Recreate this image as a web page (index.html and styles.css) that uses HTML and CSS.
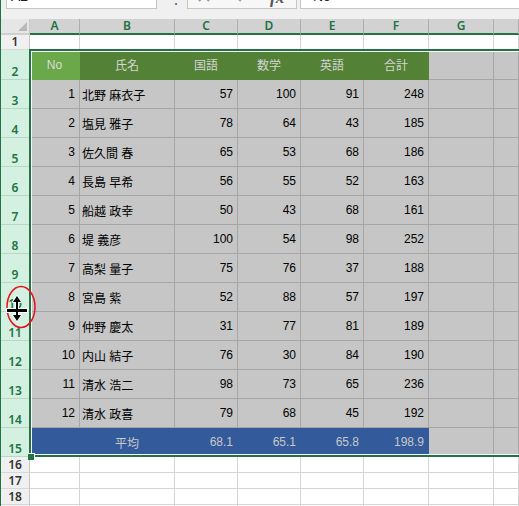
FILE: index.html
```html
<!DOCTYPE html>
<html lang="ja">
<head>
<meta charset="utf-8">
<title>Sheet</title>
<link rel="stylesheet" href="styles.css">
</head>
<body>
<div class="app">
  <div class="fbar">
    <div class="namebox">A2</div>
    <div class="dots">⋮</div>
    <div class="btns">
      <svg class="ico-x" width="16" height="16" viewBox="0 0 16 16"><path d="M3 3 L13 13 M13 3 L3 13" stroke="#9a9a9a" stroke-width="2" fill="none"/></svg>
      <svg class="ico-ok" width="16" height="16" viewBox="0 0 16 16"><path d="M2 8 L6 12 L14 3" stroke="#9a9a9a" stroke-width="2.4" fill="none"/></svg>
      <span class="fx">fx</span>
    </div>
    <div class="finput">No</div>
  </div>

  <div class="sheet">
    <div class="row hdr">
      <div class="corner"><span class="tri"></span></div>
      <div class="ch">A</div><div class="ch">B</div><div class="ch">C</div><div class="ch">D</div><div class="ch">E</div><div class="ch">F</div><div class="ch">G</div><div class="ch"></div>
    </div>
    <div class="row r1">
      <div class="rh">1</div>
      <div class="c"></div><div class="c"></div><div class="c"></div><div class="c"></div><div class="c"></div><div class="c"></div><div class="c"></div><div class="c"></div>
    </div>

    <div class="sel">
      <div class="row r2">
        <div class="rh">2</div>
        <div class="c g1 ctr">No</div><div class="c g2 ctr">氏名</div><div class="c g2 ctr">国語</div><div class="c g2 ctr">数学</div><div class="c g2 ctr">英語</div><div class="c g2 ctr">合計</div><div class="c"></div><div class="c"></div>
      </div>
      <div class="row rd"><div class="rh">3</div><div class="c num">1</div><div class="c nm">北野 麻衣子</div><div class="c num">57</div><div class="c num">100</div><div class="c num">91</div><div class="c num">248</div><div class="c"></div><div class="c"></div></div>
      <div class="row rd"><div class="rh">4</div><div class="c num">2</div><div class="c nm">塩見 雅子</div><div class="c num">78</div><div class="c num">64</div><div class="c num">43</div><div class="c num">185</div><div class="c"></div><div class="c"></div></div>
      <div class="row rd"><div class="rh">5</div><div class="c num">3</div><div class="c nm">佐久間 春</div><div class="c num">65</div><div class="c num">53</div><div class="c num">68</div><div class="c num">186</div><div class="c"></div><div class="c"></div></div>
      <div class="row rd"><div class="rh">6</div><div class="c num">4</div><div class="c nm">長島 早希</div><div class="c num">56</div><div class="c num">55</div><div class="c num">52</div><div class="c num">163</div><div class="c"></div><div class="c"></div></div>
      <div class="row rd"><div class="rh">7</div><div class="c num">5</div><div class="c nm">船越 政幸</div><div class="c num">50</div><div class="c num">43</div><div class="c num">68</div><div class="c num">161</div><div class="c"></div><div class="c"></div></div>
      <div class="row rd"><div class="rh">8</div><div class="c num">6</div><div class="c nm">堤 義彦</div><div class="c num">100</div><div class="c num">54</div><div class="c num">98</div><div class="c num">252</div><div class="c"></div><div class="c"></div></div>
      <div class="row rd"><div class="rh">9</div><div class="c num">7</div><div class="c nm">高梨 量子</div><div class="c num">75</div><div class="c num">76</div><div class="c num">37</div><div class="c num">188</div><div class="c"></div><div class="c"></div></div>
      <div class="row rd"><div class="rh">10</div><div class="c num">8</div><div class="c nm">宮島 紫</div><div class="c num">52</div><div class="c num">88</div><div class="c num">57</div><div class="c num">197</div><div class="c"></div><div class="c"></div></div>
      <div class="row rd"><div class="rh">11</div><div class="c num">9</div><div class="c nm">仲野 慶太</div><div class="c num">31</div><div class="c num">77</div><div class="c num">81</div><div class="c num">189</div><div class="c"></div><div class="c"></div></div>
      <div class="row rd"><div class="rh">12</div><div class="c num">10</div><div class="c nm">内山 結子</div><div class="c num">76</div><div class="c num">30</div><div class="c num">84</div><div class="c num">190</div><div class="c"></div><div class="c"></div></div>
      <div class="row rd"><div class="rh">13</div><div class="c num">11</div><div class="c nm">清水 浩二</div><div class="c num">98</div><div class="c num">73</div><div class="c num">65</div><div class="c num">236</div><div class="c"></div><div class="c"></div></div>
      <div class="row rd"><div class="rh">14</div><div class="c num">12</div><div class="c nm">清水 政喜</div><div class="c num">79</div><div class="c num">68</div><div class="c num">45</div><div class="c num">192</div><div class="c"></div><div class="c"></div></div>
      <div class="row rd"><div class="rh">15</div><div class="c bl"></div><div class="c bl ctr">平均</div><div class="c bl num">68.1</div><div class="c bl num">65.1</div><div class="c bl num">65.8</div><div class="c bl num">198.9</div><div class="c"></div><div class="c"></div></div>
      <span class="handle"></span>
    </div>

    <div class="row rs"><div class="rh">16</div><div class="c"></div><div class="c"></div><div class="c"></div><div class="c"></div><div class="c"></div><div class="c"></div><div class="c"></div><div class="c"></div></div>
    <div class="row rs"><div class="rh">17</div><div class="c"></div><div class="c"></div><div class="c"></div><div class="c"></div><div class="c"></div><div class="c"></div><div class="c"></div><div class="c"></div></div>
    <div class="row rs"><div class="rh">18</div><div class="c"></div><div class="c"></div><div class="c"></div><div class="c"></div><div class="c"></div><div class="c"></div><div class="c"></div><div class="c"></div></div>
    <div class="row rs"><div class="rh">19</div><div class="c"></div><div class="c"></div><div class="c"></div><div class="c"></div><div class="c"></div><div class="c"></div><div class="c"></div><div class="c"></div></div>
  </div>

  <svg class="cursor" width="40" height="56" viewBox="0 0 40 56">
    <ellipse cx="20" cy="24" rx="14" ry="20.5" fill="none" stroke="#e8101a" stroke-width="1.5"/>
    <g stroke="#fff" stroke-width="2" stroke-linejoin="round" fill="#fff">
      <path d="M16 13 L12 19 L20 19 Z"/>
      <path d="M12 32 L20 32 L16 38 Z"/>
      <rect x="15" y="18" width="2" height="15"/>
      <rect x="6" y="26" width="20" height="3"/>
    </g>
    <g fill="#000">
      <path d="M16 13 L12 19 L20 19 Z"/>
      <path d="M12 32 L20 32 L16 38 Z"/>
      <rect x="15" y="18" width="2" height="15"/>
      <rect x="6" y="26" width="20" height="3"/>
    </g>
  </svg>
</div>
</body>
</html>
```

FILE: styles.css
```css
* { box-sizing: border-box; }
html, body { margin: 0; padding: 0; }
body {
  width: 519px;
  height: 506px;
  overflow: hidden;
  background: #fff;
  font-family: "Liberation Sans", "Noto Sans CJK JP", sans-serif;
  font-size: 12px;
  color: #000;
}
.app {
  position: relative;
  width: 519px;
  height: 506px;
  overflow: hidden;
  border-left: 1px solid #217346;
}

/* formula bar */
.fbar {
  height: 19px;
  background: #f0f0f0;
  display: flex;
  align-items: flex-start;
}
.namebox {
  margin-top: -14px;
  margin-left: 5px;
  width: 151px;
  height: 23px;
  background: #fff;
  border: 1px solid #c6c6c6;
  padding: 0 0 0 4px;
  font-size: 14px;
  line-height: 19px;
  color: #222;
}
.dots {
  margin-top: -9px;
  margin-left: 12px;
  width: 10px;
  font-size: 14px;
  color: #555;
}
.btns {
  margin-top: -14px;
  margin-left: 8px;
  width: 110px;
  height: 23px;
  background: #f7f7f7;
  border: 1px solid #c6c6c6;
  display: flex;
  align-items: flex-start;
  padding-top: 1px;
}
.ico-x { margin-left: 8px; }
.ico-ok { margin-left: 22px; }
.fx {
  margin-left: 20px;
  font-family: "Liberation Serif", serif;
  font-style: italic;
  font-weight: bold;
  font-size: 17px;
  line-height: 20px;
  color: #555;
}
.finput {
  margin-top: -14px;
  margin-left: 3px;
  flex: 1;
  height: 23px;
  background: #fff;
  border: 1px solid #c6c6c6;
  border-right: none;
  padding-left: 12px;
  font-size: 14px;
  line-height: 19px;
  color: #222;
}

/* grid */
.row {
  display: grid;
  grid-template-columns: 29px 50px 95px 63px 63px 63px 65px 65px 1fr;
}
.hdr { height: 16px; }
.r1 { height: 15px; }
.r2 { height: 30px; }
.rd { height: 29px; }
.rs { height: 16px; }

.corner {
  position: relative;
  background: #e6e6e6;
  border-right: 1px solid #c8c8c8;
  border-bottom: 2px solid #d0d0d0;
}
.tri {
  position: absolute;
  right: 2px;
  bottom: 2px;
  width: 0;
  height: 0;
  border-left: 9px solid transparent;
  border-bottom: 9px solid #b9b9b9;
}
.ch {
  background: #d2d2d2;
  border-right: 1px solid #aeaeae;
  border-bottom: 2px solid #217346;
  color: #217346;
  font-family: "Noto Sans", sans-serif;
  font-weight: 600;
  font-size: 12px;
  line-height: 14px;
  text-align: center;
}

.rh {
  background: #f0f0f0;
  border-right: 1px solid #c6c6c6;
  border-bottom: 1px solid #d8d8d8;
  color: #333;
  font-family: "Noto Sans", sans-serif;
  font-weight: 600;
  font-size: 12px;
  line-height: 12px;
  display: flex;
  align-items: flex-end;
  justify-content: center;
  padding-bottom: 1px;
}
.c {
  border-right: 1px solid #d4d4d4;
  border-bottom: 1px solid #d4d4d4;
  display: flex;
  align-items: center;
  white-space: nowrap;
  overflow: hidden;
}

/* selection */
.sel { position: relative; }
.sel::after {
  content: "";
  position: absolute;
  left: 28px;
  top: -1px;
  right: -20px;
  bottom: 0;
  border: 2px solid #217346;
  box-shadow: inset 0 0 0 1px #fff;
  pointer-events: none;
}
.handle {
  position: absolute;
  left: 27px;
  bottom: -3px;
  width: 7px;
  height: 7px;
  background: #217346;
  border: 1px solid #fff;
  border-left: none;
  border-bottom: none;
  z-index: 2;
}
.sel .rh {
  background: #d3f0e0;
  border-right: 1px solid #217346;
  border-bottom: 1px solid #b8d8c4;
  color: #217346;
}
.sel .c {
  background: #c6c6c6;
  border-right-color: #a6a6a6;
  border-bottom-color: #a6a6a6;
}
.sel .c.g1 { background: #6aa84a; border-color: #6aa84a; color: #dcdcdc; }
.sel .c.g2 { background: #538135; border-color: #538135; color: #d4d4d4; }
.sel .c.bl { background: #335a9a; border-color: #335a9a; color: #c8c8c8; }
.ctr { justify-content: center; }
.num { justify-content: flex-end; padding-right: 4px; }
.nm { padding-left: 2px; }

.cursor {
  position: absolute;
  left: 0;
  top: 283px;
}
```
